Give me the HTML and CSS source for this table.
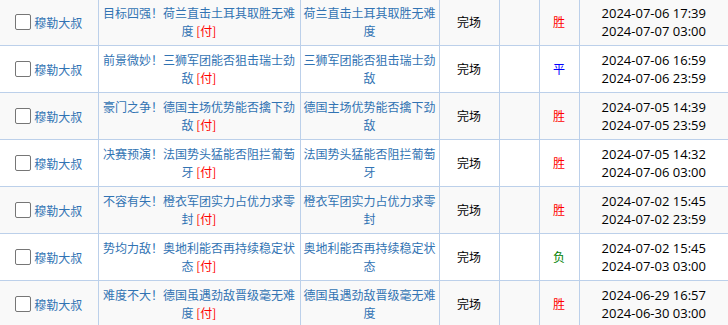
FILE: index.html
```html
<!DOCTYPE html>
<html lang="zh-CN">
<head>
<meta charset="utf-8">
<link rel="stylesheet" href="styles.css">
</head>
<body>
<div class="wrap">
<table class="list">
  <colgroup>
    <col class="c-user"><col class="c-title"><col class="c-sub"><col class="c-state"><col class="c-empty"><col class="c-res"><col class="c-time">
  </colgroup>
  <tbody>
    <tr class="odd">
      <td class="user"><span class="cb"></span><a>穆勒大叔</a></td>
      <td class="title"><a>目标四强！荷兰直击土耳其取胜无难度 <span class="pay">[付]</span></a></td>
      <td class="title"><a>荷兰直击土耳其取胜无难度</a></td>
      <td class="state">完场</td>
      <td></td>
      <td class="res win">胜</td>
      <td class="time">2024-07-06 17:39<br>2024-07-07 03:00</td>
    </tr>
    <tr>
      <td class="user"><span class="cb"></span><a>穆勒大叔</a></td>
      <td class="title"><a>前景微妙！三狮军团能否狙击瑞士劲敌 <span class="pay">[付]</span></a></td>
      <td class="title"><a>三狮军团能否狙击瑞士劲敌</a></td>
      <td class="state">完场</td>
      <td></td>
      <td class="res draw">平</td>
      <td class="time">2024-07-06 16:59<br>2024-07-06 23:59</td>
    </tr>
    <tr class="odd">
      <td class="user"><span class="cb"></span><a>穆勒大叔</a></td>
      <td class="title"><a>豪门之争！德国主场优势能否擒下劲敌 <span class="pay">[付]</span></a></td>
      <td class="title"><a>德国主场优势能否擒下劲敌</a></td>
      <td class="state">完场</td>
      <td></td>
      <td class="res win">胜</td>
      <td class="time">2024-07-05 14:39<br>2024-07-05 23:59</td>
    </tr>
    <tr>
      <td class="user"><span class="cb"></span><a>穆勒大叔</a></td>
      <td class="title"><a>决赛预演！法国势头猛能否阻拦葡萄牙 <span class="pay">[付]</span></a></td>
      <td class="title"><a>法国势头猛能否阻拦葡萄牙</a></td>
      <td class="state">完场</td>
      <td></td>
      <td class="res win">胜</td>
      <td class="time">2024-07-05 14:32<br>2024-07-06 03:00</td>
    </tr>
    <tr class="odd">
      <td class="user"><span class="cb"></span><a>穆勒大叔</a></td>
      <td class="title"><a>不容有失！橙衣军团实力占优力求零封 <span class="pay">[付]</span></a></td>
      <td class="title"><a>橙衣军团实力占优力求零封</a></td>
      <td class="state">完场</td>
      <td></td>
      <td class="res win">胜</td>
      <td class="time">2024-07-02 15:45<br>2024-07-02 23:59</td>
    </tr>
    <tr>
      <td class="user"><span class="cb"></span><a>穆勒大叔</a></td>
      <td class="title"><a>势均力敌！奥地利能否再持续稳定状态 <span class="pay">[付]</span></a></td>
      <td class="title"><a>奥地利能否再持续稳定状态</a></td>
      <td class="state">完场</td>
      <td></td>
      <td class="res lose">负</td>
      <td class="time">2024-07-02 15:45<br>2024-07-03 03:00</td>
    </tr>
    <tr class="odd">
      <td class="user"><span class="cb"></span><a>穆勒大叔</a></td>
      <td class="title"><a>难度不大！德国虽遇劲敌晋级毫无难度 <span class="pay">[付]</span></a></td>
      <td class="title"><a>德国虽遇劲敌晋级毫无难度</a></td>
      <td class="state">完场</td>
      <td></td>
      <td class="res win">胜</td>
      <td class="time">2024-06-29 16:57<br>2024-06-30 03:00</td>
    </tr>
  </tbody>
</table>
</div>
</body>
</html>
```
FILE: styles.css
```css
html, body {
  margin: 0;
  padding: 0;
  background: #ffffff;
}
body {
  font-family: "Noto Sans CJK SC", "Microsoft YaHei", sans-serif;
  font-size: 12px;
  color: #000;
  overflow: hidden;
}
.wrap {
  margin-top: -2px;
}
.list {
  width: 728px;
  table-layout: fixed;
  border-collapse: collapse;
  border-spacing: 0;
}
.c-user { width: 98px; }
.c-title { width: 202px; }
.c-sub { width: 139px; }
.c-state { width: 60px; }
.c-empty { width: 40px; }
.c-res { width: 40px; }
.c-time { width: 149px; }

.list td {
  height: 47px;
  padding: 0 3px;
  box-sizing: border-box;
  border: 1px solid #bcd0ea;
  text-align: center;
  vertical-align: middle;
  line-height: 18px;
}
.list tr td:first-child { border-left: none; }
.list tr td:last-child { border-right: none; }
.list tr.odd td { background: #f9f9f9; }

.list a {
  color: #3173b3;
  text-decoration: none;
}
.user {
  white-space: nowrap;
}
.cb {
  display: inline-block;
  width: 14px;
  height: 14px;
  border: 1px solid #767676;
  border-radius: 2px;
  background: #fff;
  vertical-align: middle;
  margin: -2px 3px 0 0;
}
.user a {
  vertical-align: middle;
}
.list a .pay { color: #ff0000; }
.state { color: #000; }
.res.win { color: #ff0000; }
.res.draw { color: #0000ff; }
.res.lose { color: #008000; }
.time {
  font-family: "Open Sans", "Noto Sans CJK SC", sans-serif;
  font-size: 13px;
  line-height: 17px;
  color: #000;
}
```
